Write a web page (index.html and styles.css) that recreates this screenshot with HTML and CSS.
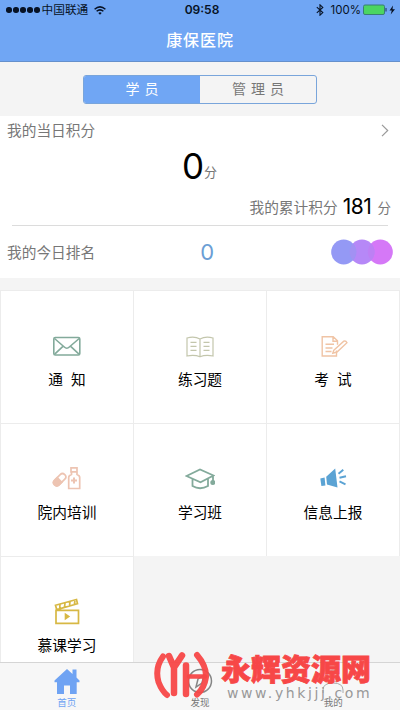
FILE: index.html
```html
<!DOCTYPE html>
<html lang="zh-CN">
<head>
<meta charset="utf-8">
<title>康保医院</title>
<link rel="stylesheet" href="styles.css">
</head>
<body>
<div class="app">
  <header class="header">
    <div class="status">
      <div class="carrier">
        <span class="dots"><i></i><i></i><i></i><i></i><i></i></span>
        <span>中国联通</span>
        <svg class="wifi" width="12" height="9" viewBox="0 0 12 9" fill="none" stroke="#071225" stroke-width="1.5"><path d="M.6 3.2Q6-1.4 11.4 3.2M2.6 5.3Q6 2.4 9.4 5.3"/><path d="M4.3 7Q6 5.5 7.7 7L6 8.7Z" fill="#071225" stroke="none"/></svg>
      </div>
      <div class="time">09:58</div>
      <div class="power">
        <svg width="8" height="12" viewBox="0 0 8 12" fill="none" stroke="#071225" stroke-width="1.1"><path d="M.8 3.2 6.8 8.6 4 11.2V.8L6.8 3.4.8 8.8"/></svg>
        <span class="percent">100%</span>
        <svg width="33" height="12" viewBox="0 0 33 12"><rect x=".5" y="1" width="21" height="9.5" rx="1.5" fill="#4bd562" stroke="#397e73"/><path d="M22.5 4h1v3.500h-1z" fill="#173553"/><path d="M30 1.500 26.500 6.400h2.300L27.700 10.500 32 5.200h-2.500Z" fill="#071225"/></svg>
      </div>
    </div>
    <h1 class="title">康保医院</h1>
  </header>

  <div class="segments">
    <div class="segment active">学 员</div>
    <div class="segment">管 理 员</div>
  </div>

  <section class="score">
    <div class="score-head"><span>我的当日积分</span><svg width="8" height="13" viewBox="0 0 8 13" fill="none" stroke="#999" stroke-width="1.2"><path d="M1 .8 6.700 6.500 1 12.200"/></svg></div>
    <div class="today"><b>0</b><span>分</span></div>
    <div class="total"><span>我的累计积分</span><b>181</b><span>分</span></div>
    <div class="rank">
      <span>我的今日排名</span><b>0</b>
      <svg width="62" height="26" viewBox="0 0 62 26"><circle cx="49.300" cy="13" r="12.500" fill="#d578f7"/><circle cx="31" cy="13" r="12.500" fill="#b688f7"/><circle cx="12.700" cy="13" r="12.500" fill="#9499f5"/><path d="M22 4.500a12.500 12.500 0 0 1 0 17a12.500 12.500 0 0 1 0-17z" fill="#a291f3"/><path d="M40.200 4.500a12.500 12.500 0 0 1 0 17a12.500 12.500 0 0 1 0-17z" fill="#bd80f4"/></svg>
    </div>
  </section>

  <main class="grid">
    <div class="cell">
      <svg class="icon" viewBox="0 0 30 30" fill="none" stroke="#83aa9b" stroke-width="1.600"><rect x="1.800" y="6.500" width="26" height="17.500" rx="1.500"/><path d="M2.500 7.500 12.300 16q2.500 2.500 5 0L27.200 7.500M2.700 23.200l8.500-8M27 23.200l-8.600-8"/></svg>
      <span>通&nbsp; 知</span>
    </div>
    <div class="cell">
      <svg class="icon" viewBox="0 0 30 30" fill="none" stroke="#c3c6ac" stroke-width="1.200"><path d="M15 8Q9.500 5 2 7v18q7.500-1.500 13 .8Q20.500 23.500 28 25V7q-7.500-2-13 1v17.500M5.500 11.300h6M5.500 15.300h6M5.500 19.300h6M18.500 11.300h6M18.500 15.300h6M18.500 19.300h6"/></svg>
      <span>练习题</span>
    </div>
    <div class="cell">
      <svg class="icon" viewBox="0 0 30 30" fill="none" stroke="#f0c4a5" stroke-width="1.400"><path d="M18.500 19.500V25H4.200V5.800h11l4.300 4v4M15 6v4.200h4.500M7.500 13.300H16M7.500 17h7M7.500 20.500h6"/><path d="m15.800 19.200 10-9q2-.8 3.200 1.500L19 21l-4.200 1.200z"/></svg>
      <span>考&nbsp; 试</span>
    </div>
    <div class="cell">
      <svg class="icon" viewBox="0 0 30 30" fill="none" stroke="#edc4b2" stroke-width="1.700"><g transform="rotate(-45 7.500 16)"><rect x=".5" y="12.700" width="14.500" height="6.500" rx="3.200"/><path d="M7.500 12.700v6.500H4a3.200 3.200 0 0 1 0-6.500z" fill="#edc4b2"/></g><path d="M19 3.800h6v4h-6zM19.500 8v2.500q-2.800 1-2.800 3V24.500h11V13.500q0-2-2.700-3V8"/><path d="M22 13.500v6M19 16.500h6" stroke-width="2"/></svg>
      <span>院内培训</span>
    </div>
    <div class="cell">
      <svg class="icon" viewBox="0 0 30 30" fill="none" stroke="#83aa9b" stroke-width="1.800"><path d="M1.500 12 15 5.500 28.500 11.500 15.500 18.300zM7.500 15v7q7.500 4.500 15.500 0v-7M28 12v5"/><circle cx="27.800" cy="18.500" r="1.600" fill="#83aa9b"/></svg>
      <span>学习班</span>
    </div>
    <div class="cell">
      <svg class="icon" viewBox="0 0 30 30" fill="#5ba3d4"><path d="m2.300 14.500 4.300-1 .8 8-4 .5zM8.200 12.700l9-8.200 2.300 19L9 20.500z"/><path d="m20.500 9.700 4.800-4M21.500 13.700l6.500-1.500M21.500 17.300l6 3" stroke="#5ba3d4" stroke-width="1.900"/></svg>
      <span>信息上报</span>
    </div>
    <div class="cell">
      <svg class="icon" viewBox="0 0 30 30" fill="none" stroke="#d7b844" stroke-width="1.700"><path d="M4 13.300h22.500v13H4zM3.500 8.300 24.500 2.500l1 4.200L4.700 12.600zM8 7.200l-.3 4.500M13 5.900l-.5 4.400M18 4.500l-.5 4.400M23 3.200l-.6 4.200"/><path d="M12.700 15.700v7.600l5.500-3.800z" fill="#d7b844" stroke="none"/></svg>
      <span>慕课学习</span>
    </div>
  </main>

  <nav class="tabs">
    <div class="tab current"><svg width="28" height="28" viewBox="0 0 28 28" fill="#6fa3f3"><path d="M1.500 13.500 14 2l5.500 5V2.500h4v8L26.500 13.500v1.800h-2.800V27H17v-8.500h-6V27H4V15.300H1.500z"/></svg><span>首页</span></div>
    <div class="tab"><svg width="28" height="28" viewBox="0 0 28 28" fill="none" stroke="#858585" stroke-width="1.500"><circle cx="14" cy="14" r="11.500"/><path d="m18 8-6 4-2 8 6-4z"/></svg><span>发现</span></div>
    <div class="tab"><svg width="28" height="28" viewBox="0 0 28 28" fill="none" stroke="#aaa" stroke-width="1"><circle cx="14" cy="9" r="6"/><path d="M4 26v-3q0-7 10-7t10 7v3"/></svg><span>我的</span></div>
  </nav>

  <div class="watermark">
    <svg width="57" height="50" viewBox="0 0 57 50" fill="none" stroke="#f74747" stroke-opacity=".95" stroke-width="6" stroke-linecap="round"><path d="M10 5.500Q1.500 17 5.500 31 9 40 14 44"/><path d="m16 5 5 11.500L29 4.500M21 16.500V42" stroke-width="6.500"/><path d="M33 14.500V43" stroke-width="6.500"/><path d="M36 25.500h16" stroke-width="4.500"/><path d="M44 4q9.500 11 9 22Q51.500 37 44 43.500"/></svg>
    <div class="brand"><strong>永辉资源网</strong><span>www.yhkjjj.com</span></div>
  </div>
</div>
</body>
</html>
```
FILE: styles.css
```css
* { box-sizing: border-box; }
body { margin: 0; font-family: Inter, "Noto Sans CJK SC", sans-serif; }
.app { position: relative; width: 400px; height: 710px; overflow: hidden; background: #f4f4f4; color: #777; display: flex; flex-direction: column; }
svg { display: block; flex-shrink: 0; }
b { font-weight: 400; }
.header { height: 62px; flex-shrink: 0; background: #70a6f4; border-bottom: 1px solid #6590cc; }
.status { height: 20px; padding: 0 4px 0 6px; display: grid; grid-template-columns: 1fr auto 1fr; align-items: center; color: #071225; font-size: 12px; line-height: 20px; }
.carrier { display: flex; align-items: center; font-size: 11.700px; }
.dots { display: flex; gap: 1.500px; margin-right: 2px; }
.dots i { width: 5.500px; height: 5.500px; border-radius: 50%; background: #071225; }
.wifi { margin-left: 6px; }
.time { font-weight: 600; letter-spacing: 0; padding-left: 2px; }
.power { display: flex; align-items: center; justify-content: flex-end; }
.percent { margin: 0 2px 0 7px; font-size: 11.500px; }
.title { margin: 0; color: #fff; font-size: 16px; font-weight: 500; line-height: 41px; text-align: center; letter-spacing: .9px; }
.segments { width: 234px; height: 29px; flex-shrink: 0; margin: 13px 0 12px 83px; display: flex; border: 1px solid #79a5db; border-radius: 3px; overflow: hidden; }
.segment { flex: 1; text-align: center; font-size: 14px; line-height: 26px; word-spacing: 1px; }
.active { background: #70a6f4; color: #fff; }
.score { height: 162px; flex-shrink: 0; background: #fff; font-size: 14.700px; }
.score-head { height: 29px; padding: 0 11px 0 7px; display: flex; align-items: center; justify-content: space-between; }
.score-head span, .rank span { margin-top: -2px; }
.today { height: 44px; padding-left: 182px; display: flex; align-items: baseline; line-height: 43px; }
.today b { font-size: 35px; color: #000; }
.today span { font-size: 13px; transform: translateY(-2px); }
.total { height: 37px; margin: 0 12px; border-bottom: 1px solid #dcdcdc; display: flex; align-items: baseline; justify-content: flex-end; gap: 6px; line-height: 36px; }
.total span:last-child { font-size: 13.500px; margin-right: -3px; }
.total b { color: #000; font-size: 21px; letter-spacing: -.4px; margin-left: -1px; }
.total span { transform: translateY(-1px); }
.rank { height: 52px; padding: 0 7px; display: flex; align-items: center; }
.rank b { margin-left: 105px; font-size: 22px; color: #6b9ed5; }
.rank svg { margin-left: auto; }
.grid { flex-shrink: 0; margin-top: 12px; display: grid; grid-template-columns: 134px 133px 133px; grid-auto-rows: 133px; }
.cell { background: #fff; border: solid #ececec; border-width: 1px 1px 0 0; padding-top: 40px; display: flex; flex-direction: column; align-items: center; color: #000; font-size: 14.700px; line-height: 22px; }
.cell:nth-child(3n + 1) { border-left-width: 1px; }
.icon { width: 30px; height: 30px; margin-bottom: 8px; }
.tabs { position: absolute; left: 0; right: 0; bottom: 0; height: 48px; background: #f7f7f7; border-top: 1px solid #d5d5d5; display: grid; grid-template-columns: repeat(3, 1fr); }
.tab { padding-top: 4px; display: flex; flex-direction: column; align-items: center; font-size: 9.500px; line-height: 16px; }
.current { color: #6fa3f3; }
.watermark { position: absolute; left: 153px; top: 651px; display: flex; }
.brand { margin-left: 11px; width: 156px; }
.brand strong { display: block; margin-top: 1px; color: #f74747; font-size: 30px; line-height: 34px; font-weight: 900; -webkit-text-stroke: .8px #f74747; white-space: nowrap; }
.brand span { display: block; margin: -2px 0 0 6px; color: #999; font-family: "DejaVu Sans", sans-serif; font-size: 14px; line-height: 18px; letter-spacing: 2.600px; white-space: nowrap; }
```
